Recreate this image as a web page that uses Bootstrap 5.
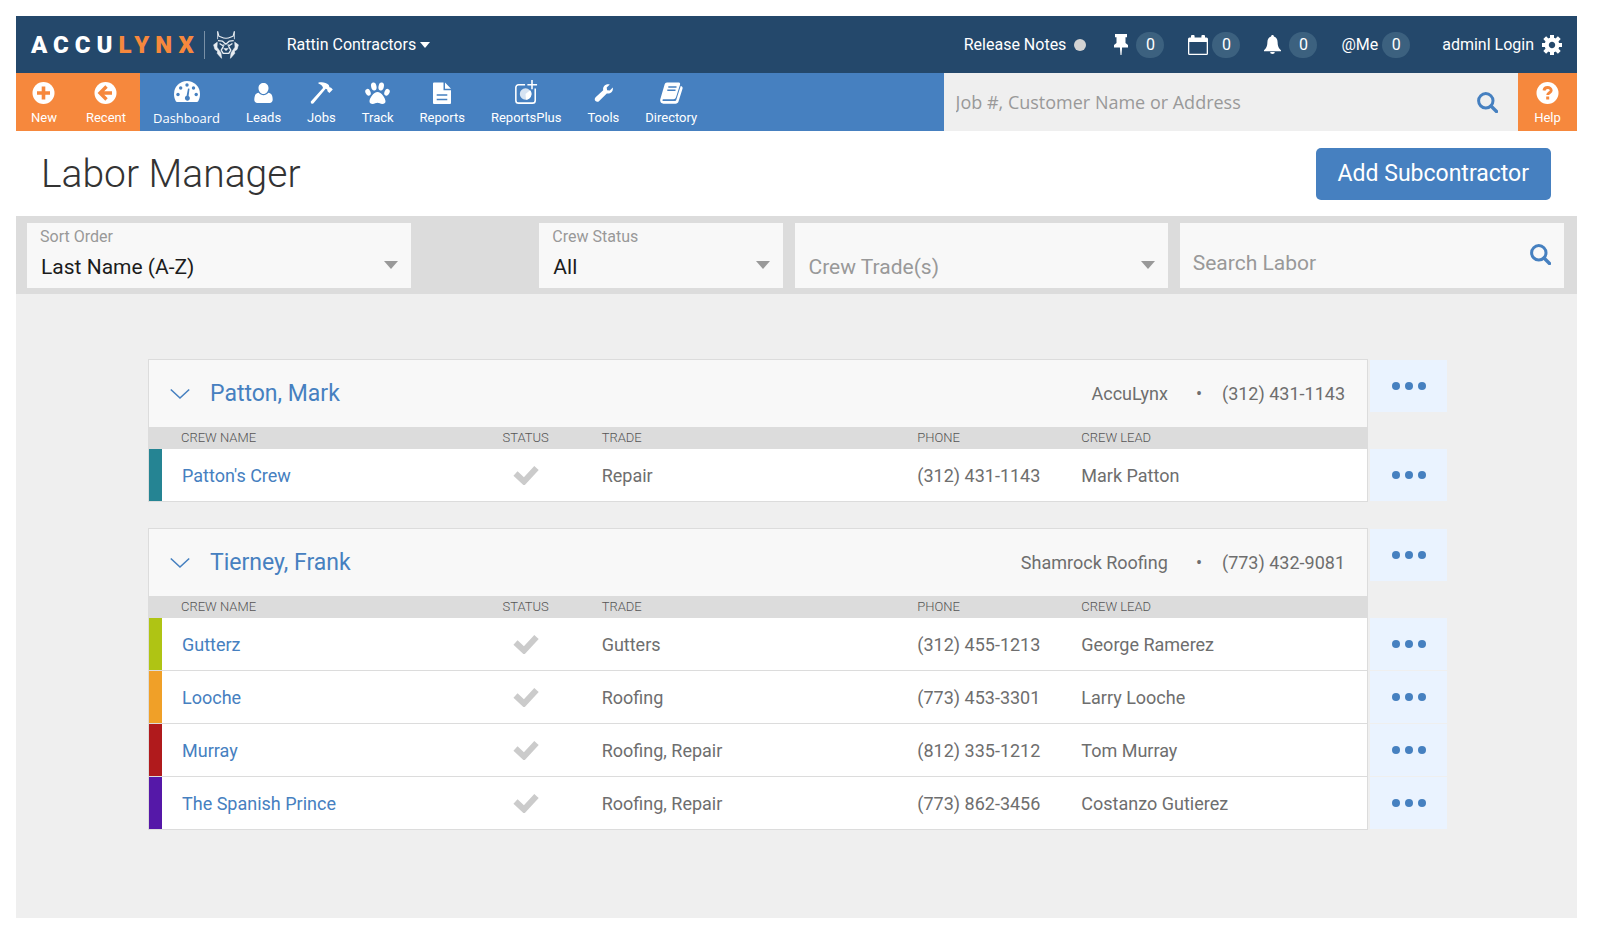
<!DOCTYPE html>
<html lang="en">
<head>
<meta charset="utf-8">
<meta name="viewport" content="width=device-width, initial-scale=1">
<title>Labor Manager</title>
<link href="https://cdn.jsdelivr.net/npm/bootstrap@5.3.0/dist/css/bootstrap.min.css" rel="stylesheet">
<style>
  :root {
    --navy: #24486b;
    --blue: #4680c0;
    --orange: #f6883d;
    --line: #dcdcdc;
    --panel: #f8f8f8;
    --page: #efefef;
    --muted: #999;
    --text: #6e6e6e;
  }
  body { font-family: Roboto, "Liberation Sans", sans-serif; font-size: 18px; color: var(--text); background: #fff; }
  a { color: var(--blue); text-decoration: none; }
  svg { display: block; flex: none; }
  .app { margin: 16px 21px 14px 16px; min-height: calc(100vh - 30px); background: var(--page); }

  .topbar { background: var(--navy); color: #fff; height: 57px; padding: 0 15px; font-size: 16px; }
  .topbar a, .topbar button { color: #fff; }
  .wordmark { font-size: 24px; font-weight: 900; line-height: 28px; letter-spacing: 6px; }
  .wordmark span { color: var(--orange); }
  .logo-rule { width: 1px; height: 28px; background: #7990a6; }
  .plain { border: 0; background: none; padding: 0; }
  .count { background: #3c617f; border-radius: 13px; width: 28px; height: 26px; }
  .dot { width: 12px; height: 12px; background: #d3d3d3; }

  .mainnav { background: var(--blue); height: 58px; }
  .navitem { color: #fff; font-size: 13px; line-height: 18px; padding: 8px 13px 0; }
  .navitem svg { margin-bottom: 4px; }
  .dash { font-family: "Open Sans", sans-serif; }
  .hot { background: var(--orange); }
  .hot .navitem { padding: 8px 14px 0 15px; }
  .help-link { width: 59px; }
  .jobsearch { flex: 0 0 36.8%; background: var(--page); padding: 0 20px 0 12px; }
  .jobsearch input { font: 18px "Open Sans", sans-serif; }
  input.bare { border: 0; background: none; outline: 0; padding: 0; min-width: 0; }
  input::placeholder { color: var(--muted); opacity: 1; }

  .titlebar { background: #fff; height: 85px; padding: 0 26px 0 25px; }
  .titlebar h1 { font-size: 39px; font-weight: 300; line-height: 48px; color: #333; }
  .btn-add { background: var(--blue); color: #fff; font-size: 23px; line-height: 28px; padding: 12px 22px; border: 0; border-radius: 5px; }
  .btn-add:hover { background: #3a70ad; color: #fff; }

  .filters { background: var(--line); padding: 7px 13px 6px 11px; gap: 12px; }
  .field { background: var(--panel); height: 65px; padding: 5px 13px 7px; min-width: 0; }
  .field label { font-size: 16px; line-height: 18px; color: var(--muted); }
  .field select { border: 0; outline: 0; padding: 0 22px 0 1px; font-size: 21px; line-height: 28px; color: #1c1c1c; appearance: none;
    background: url("data:image/svg+xml,%3Csvg xmlns='http://www.w3.org/2000/svg' viewBox='0 0 14 8'%3E%3Cpath d='M0 0h14L7 8z' fill='%23999'/%3E%3C/svg%3E") no-repeat right 0 top 8px / 14px 8px; }
  .field .unset { color: var(--muted); }
  .field input { font-size: 21px; line-height: 28px; }
  .f-wide { flex: 358 1 0; } .f-gap { flex: 104 1 0; } .f-status { flex: 217 1 0; } .f-trade { flex: 347 1 0; }

  .groups { padding: 65px 130px 88px 132px; gap: 26px; }
  .grouphead { background: var(--panel); border: 1px solid var(--line); border-bottom: 0; height: 68px; padding: 0 22px 0 21px; }
  .grouphead h2 { font-size: 23px; line-height: 28px; font-weight: 400; }
  .more { background: #eaf3ff; border: 0; width: 77px; height: 52px; }
  .grouphead + .more { margin: 1px 0 0 2px; }

  .crews { table-layout: fixed; border-collapse: separate; border-spacing: 0; }
  .crews th { background: var(--line); font-size: 13px; line-height: 22px; font-weight: 300; color: #555; padding: 0 0 0 28px; }
  .crews th:first-child { padding-left: 33px; }
  .crews td { background: #fff; height: 53px; padding: 0 0 0 28px; border-bottom: 1px solid var(--line); }
  .crews .swatch { padding: 0; border-left: 1px solid var(--line); }
  .crews td.name { padding-left: 20px; }
  .crews .status { padding: 0; text-align: center; }
  .crews .status svg { margin: 0 auto; }
  .crews td.lead-cell { border-right: 1px solid var(--line); }
  .crews .act { background: none; padding: 0 0 0 2px; border-color: var(--page); }
  .c-swatch { width: 14px; } .c-name { width: 24.3%; } .c-status { width: 96px; } .c-trade { width: 24.3%; } .c-phone { width: 164px; } .c-act { width: 79px; }
</style>
</head>
<body>

<svg width="0" height="0" class="position-absolute" aria-hidden="true">
  <symbol id="i-dots" viewBox="0 0 34 8"><circle cx="4" cy="4" r="4"/><circle cx="17" cy="4" r="4"/><circle cx="30" cy="4" r="4"/></symbol>
  <symbol id="i-check" viewBox="0 0 26 20"><path d="M2.500 8.500l8.500 8L23.500 3" fill="none" stroke="#cbcbcb" stroke-width="6"/></symbol>
  <symbol id="i-chev" viewBox="0 0 20 12"><path d="M.8 1.500L10 10l9.200-8.500" fill="none" stroke="#4680c0" stroke-width="1.600"/></symbol>
  <symbol id="i-search" viewBox="0 0 21 21"><circle cx="8.800" cy="8.800" r="7.200" fill="none" stroke="#4680c0" stroke-width="3"/><path d="M14 14l5.500 5.500" stroke="#4680c0" stroke-width="3.400" stroke-linecap="round"/></symbol>
</svg>

<div class="app">
  <header class="topbar d-flex align-items-center">
    <a href="#" class="d-flex align-items-center" aria-label="AccuLynx home">
      <span class="wordmark">ACCU<span>LYNX</span></span>
      <span class="logo-rule ms-1 me-2"></span>
      <svg width="26" height="28" viewBox="0 0 75 85" fill="none" stroke="#e8edf2" stroke-linejoin="round">
        <path d="M12 1l4 15c5 0 10 6 21.500 6S54 16 59 16l4-15" stroke-width="3.500"/>
        <path d="M12 1v24M63 1v24" stroke-width="2.500"/>
        <path d="M0 42l11-8-1 15 12 17 2 17-13-15 1-7-8-5zM75 42l-11-8 1 15-12 17-2 17 13-15-1-7 8-5z" fill="#e8edf2" stroke-width="2"/>
        <path d="M13 29l14 2 10 9 10-9 14-2M18 38l9 6 6-2M57 38l-9 6-6-2" stroke-width="4"/>
        <path d="M30 46l-7 12 6 10h17l6-10-7-12" stroke-width="4"/>
        <path d="M29 52h17l-8.500 9z" fill="#e8edf2" stroke="none"/>
      </svg>
    </a>
    <button type="button" class="plain d-flex align-items-center gap-1 ms-5">Rattin Contractors
      <svg width="10" height="6" viewBox="0 0 10 6" fill="#fff"><path d="M0 0h10L5 6z"/></svg>
    </button>
    <div class="d-flex align-items-center ms-auto">
      <a href="#" class="d-flex align-items-center me-4">Release Notes<span class="dot rounded-circle ms-2 me-1"></span></a>
      <a href="#" class="d-flex align-items-center gap-2 me-4" aria-label="Pinned">
        <svg width="14" height="21" viewBox="0 0 14 21" fill="#fff"><path d="M1 0h12v3.200h-1.500V9l2.500 2v2.500H8.100L7.500 21h-1l-.6-7.500H0V11l2.500-2V3.200H1z"/></svg>
        <span class="count d-flex align-items-center justify-content-center">0</span>
      </a>
      <a href="#" class="d-flex align-items-center gap-1 me-4" aria-label="Calendar">
        <svg width="20" height="20" viewBox="0 0 20 20"><path fill="#fff" fill-rule="evenodd" d="M1.500 2.500H3V1a1 1 0 0 1 1-1h1.600a1 1 0 0 1 1 1v1.500h6.800V1a1 1 0 0 1 1-1H16a1 1 0 0 1 1 1v1.500h1.500A1.500 1.500 0 0 1 20 4v14.500a1.500 1.500 0 0 1-1.500 1.500h-17A1.500 1.500 0 0 1 0 18.500V4a1.500 1.500 0 0 1 1.500-1.500zM1.300 7v11.700h17.400V7z"/></svg>
        <span class="count d-flex align-items-center justify-content-center">0</span>
      </a>
      <a href="#" class="d-flex align-items-center gap-2 me-4" aria-label="Alerts">
        <svg width="17" height="19" viewBox="0 0 17 19" fill="#fff"><path d="M8.500 0c.9 0 1.400.6 1.400 1.600 2.400.7 3.600 2.800 3.700 5.400.1 4.500 1.200 6.300 3.400 8.300v.9H0v-.9C2.200 13.300 3.300 11.500 3.400 7c.1-2.600 1.300-4.700 3.700-5.400C7.100.6 7.600 0 8.500 0zM6.200 17h4.600a2.300 2 0 0 1-4.600 0z"/></svg>
        <span class="count d-flex align-items-center justify-content-center">0</span>
      </a>
      <a href="#" class="d-flex align-items-center gap-1 me-4">@Me
        <span class="count d-flex align-items-center justify-content-center">0</span>
      </a>
      <button type="button" class="plain d-flex align-items-center gap-2 ms-2">adminl Login
        <svg width="20" height="20" viewBox="-10 -10 20 20"><circle r="5.300" fill="none" stroke="#fff" stroke-width="4.200"/><g stroke="#fff" stroke-width="4"><path d="M0-6v-4M0 6v4M6 0h4M-6 0h-4M4.500-4.500L7.300-7.300M4.500 4.500l2.800 2.800M-4.500 4.500l-2.800 2.800M-4.500-4.500l-2.800-2.800"/></g></svg>
      </button>
    </div>
  </header>

  <nav class="mainnav d-flex" aria-label="Main">
    <div class="hot d-flex">
      <a href="#" class="navitem d-flex flex-column align-items-center">
        <svg width="23" height="24" viewBox="0 0 23 24"><circle cx="11.500" cy="12" r="11" fill="#fff"/><path d="M11.500 5.500v13M5 12h13" stroke="#f6883d" stroke-width="3.600"/></svg>New</a>
      <a href="#" class="navitem d-flex flex-column align-items-center">
        <svg width="23" height="24" viewBox="0 0 23 24"><circle cx="11.500" cy="12" r="11" fill="#fff"/><path d="M12.500 5.500L6 12l6.500 6.500M6.500 12H18" stroke="#f6883d" stroke-width="3.400" fill="none"/></svg>Recent</a>
    </div>
    <a href="#" class="navitem dash d-flex flex-column align-items-center">
      <svg width="26" height="24" viewBox="0 0 26 24"><path fill="#fff" d="M13 0a13 13 0 0 1 13 13c0 3-.7 5-1.800 7.200a1.500 1.500 0 0 1-1.300.8H3.100a1.500 1.500 0 0 1-1.300-.8C.7 18 0 16 0 13A13 13 0 0 1 13 0z"/><g fill="#4680c0"><circle cx="4" cy="13.500" r="1.700"/><circle cx="6.700" cy="7" r="1.700"/><circle cx="13" cy="4" r="1.700"/><circle cx="19.500" cy="7" r="1.700"/><circle cx="22.200" cy="13.500" r="1.700"/><path d="M14 7.500l1.500.2-.9 7.300a2.500 2.500 0 1 1-2-.2z"/></g></svg>Dashboard</a>
    <a href="#" class="navitem d-flex flex-column align-items-center">
      <svg width="19" height="24" viewBox="0 0 19 24" fill="#fff"><path d="M9.500 2C12.300 2 14.500 4 14.500 7c0 3.300-2.200 6-5 6s-5-2.700-5-6c0-3 2.200-5 5-5zM4.600 11.800c1.300 1.600 3 2.500 4.900 2.500s3.600-.9 4.900-2.500c3 .3 4.300 3 4.300 7 0 2-1.300 3.200-3 3.200H3.300c-1.700 0-3-1.200-3-3.200 0-4 1.300-6.700 4.300-7z"/></svg>Leads</a>
    <a href="#" class="navitem d-flex flex-column align-items-center">
      <svg width="23" height="24" viewBox="0 0 23 24" fill="#fff"><path d="M8.500 1.500c4-.8 7.500-.2 10.300 2.600l.7 2.200 1.600.5 1.700 1.800-3.400 3.500-1.900-1.900-.3-1.700-1.500-.8L3.300 22.600c-1.500.5-2.800-.7-2.500-2.200L13 7c-.2-2-1.500-3.500-4.600-4.600z"/></svg>Jobs</a>
    <a href="#" class="navitem d-flex flex-column align-items-center">
      <svg width="25" height="24" viewBox="0 0 25 24" fill="#fff"><ellipse cx="8.800" cy="5.500" rx="2.700" ry="4" transform="rotate(-12 8.800 5.500)"/><ellipse cx="16.200" cy="5.500" rx="2.700" ry="4" transform="rotate(12 16.200 5.500)"/><ellipse cx="3" cy="11.300" rx="2.500" ry="3.500" transform="rotate(-25 3 11.300)"/><ellipse cx="22" cy="11.300" rx="2.500" ry="3.500" transform="rotate(25 22 11.300)"/><path d="M12.500 11c3.800 0 8 6 8 9.300 0 1.800-1.200 2.700-3.200 2.700-1.900 0-3.200-1.200-4.800-1.200S9.600 23 7.700 23c-2 0-3.200-.9-3.200-2.700 0-3.300 4.200-9.300 8-9.300z"/></svg>Track</a>
    <a href="#" class="navitem d-flex flex-column align-items-center">
      <svg width="18" height="24" viewBox="0 0 18 24"><path fill="#fff" d="M1 1.500h9.500V9.300H18V22a1 1 0 0 1-1 1H1a1 1 0 0 1-1-1V2.500a1 1 0 0 1 1-1zM12 1.500l6 6.300h-6z"/><path d="M3.700 14h10.600M3.700 18.500h10.600" stroke="#4680c0" stroke-width="1.600"/></svg>Reports</a>
    <a href="#" class="navitem d-flex flex-column align-items-center">
      <svg width="24" height="24" viewBox="0 1 24 26" overflow="visible"><path d="M11 5H4a3 3 0 0 0-3 3v14a3 3 0 0 0 3 3h15a3 3 0 0 0 3-3V9M18.500 0v10M13.500 5h10.500" fill="none" stroke="#fff" stroke-width="1.700"/><circle cx="11.500" cy="15" r="6.200" fill="#d6e3f2"/><path d="M11.500 15l5-4a6.200 6.200 0 0 1-4.500 10.200z" fill="#fff"/></svg>ReportsPlus</a>
    <a href="#" class="navitem d-flex flex-column align-items-center">
      <svg width="19" height="24" viewBox="0 0 19 24" fill="#fff"><path d="M15.800 3.400L12.700 6.500l.4 2.700 2.700.4 3-3c.7 3.600-2.200 6.600-6 5.900l-7.600 7.400c-1.100 1.100-2.600 1.100-3.700.1-1.100-1.100-1-2.600.1-3.700l7.600-7.100C8.400 5.400 11.500 2.200 15.800 3.400z"/></svg>Tools</a>
    <a href="#" class="navitem d-flex flex-column align-items-center">
      <svg width="23" height="24" viewBox="0 0 23 24"><path fill="#fff" d="M7 1.500h11.500c1.300 0 1.900.9 1.500 2.200l-4 12.600c-.4 1.300-1.300 2-2.600 2H3.200c-.9 0-1 1.800.2 1.800h11.300c.8 0 1.200-.3 1.500-1.100L20.700 5c1.600.5 2.200 1.400 1.800 2.700l-4 12.800c-.4 1.400-1.500 2.200-2.900 2.200H3.400C1 22.700-.3 20.600.3 18.200L4.600 3.500C5 2.200 5.700 1.500 7 1.500z"/><path d="M8.300 6h8.200M7.300 9.200h8.200" stroke="#4680c0" stroke-width="1.400"/></svg>Directory</a>
    <form class="jobsearch d-flex align-items-center ms-auto" role="search" onsubmit="return false">
      <input class="bare flex-fill" type="search" placeholder="Job #, Customer Name or Address" aria-label="Job number, customer name or address">
      <button class="plain" aria-label="Search jobs"><svg width="21" height="21"><use href="#i-search"/></svg></button>
    </form>
    <a href="#" class="navitem hot help-link d-flex flex-column align-items-center">
      <svg width="23" height="24" viewBox="0 0 23 24"><circle cx="11.500" cy="12" r="11" fill="#fff"/><path d="M8 9.500c.2-2 1.600-3 3.600-3s3.600 1.200 3.600 2.900c0 2.300-3.500 2.400-3.500 4.600" fill="none" stroke="#f6883d" stroke-width="2.900"/><path d="M10.200 15.500h3v3h-3z" fill="#f6883d"/></svg>Help</a>
  </nav>

  <main>
    <div class="titlebar d-flex align-items-center justify-content-between">
      <h1 class="mb-0">Labor Manager</h1>
      <button type="button" class="btn btn-add">Add Subcontractor</button>
    </div>

    <div class="filters d-flex">
      <div class="field f-wide d-flex flex-column justify-content-between">
        <label for="sort">Sort Order</label>
        <select id="sort"><option>Last Name (A-Z)</option></select>
      </div>
      <div class="f-gap"></div>
      <div class="field f-status d-flex flex-column justify-content-between">
        <label for="status">Crew Status</label>
        <select id="status"><option>All</option></select>
      </div>
      <div class="field f-trade d-flex flex-column justify-content-end">
        <select id="trade" class="unset" aria-label="Crew trades"><option>Crew Trade(s)</option></select>
      </div>
      <div class="field f-wide d-flex align-items-center">
        <input class="bare flex-fill pt-3" type="search" placeholder="Search Labor" aria-label="Search labor">
        <button type="button" class="plain" aria-label="Search"><svg width="21" height="21"><use href="#i-search"/></svg></button>
      </div>
    </div>

    <div class="groups d-flex flex-column">
      <section>
        <div class="d-flex align-items-start">
          <div class="grouphead flex-fill d-flex align-items-center">
            <button type="button" class="plain me-3" aria-label="Collapse"><svg width="20" height="12"><use href="#i-chev"/></svg></button>
            <h2 class="mb-0 ms-1"><a href="#">Patton, Mark</a></h2>
            <span class="ms-auto">AccuLynx</span><span class="ms-4 me-3 px-1">•</span><span>(312) 431-1143</span>
          </div>
          <button type="button" class="more d-flex align-items-center justify-content-center" aria-label="Actions for Patton, Mark"><svg width="34" height="8" fill="#4680c0"><use href="#i-dots"/></svg></button>
        </div>
        <table class="crews w-100">
          <colgroup><col class="c-swatch"><col class="c-name"><col class="c-status"><col class="c-trade"><col class="c-phone"><col><col class="c-act"></colgroup>
          <thead><tr><th colspan="2">CREW NAME</th><th class="status">STATUS</th><th>TRADE</th><th>PHONE</th><th>CREW LEAD</th><td class="act h-auto border-0"></td></tr></thead>
          <tbody>
            <tr><td class="swatch" style="background:#258493"></td><td class="name"><a href="#">Patton's Crew</a></td><td class="status"><svg width="26" height="20" role="img" aria-label="Active"><use href="#i-check"/></svg></td><td>Repair</td><td>(312) 431-1143</td><td class="lead-cell">Mark Patton</td><td class="act"><button type="button" class="more d-flex align-items-center justify-content-center" aria-label="Actions"><svg width="34" height="8" fill="#4680c0"><use href="#i-dots"/></svg></button></td></tr>
          </tbody>
        </table>
      </section>

      <section>
        <div class="d-flex align-items-start">
          <div class="grouphead flex-fill d-flex align-items-center">
            <button type="button" class="plain me-3" aria-label="Collapse"><svg width="20" height="12"><use href="#i-chev"/></svg></button>
            <h2 class="mb-0 ms-1"><a href="#">Tierney, Frank</a></h2>
            <span class="ms-auto">Shamrock Roofing</span><span class="ms-4 me-3 px-1">•</span><span>(773) 432-9081</span>
          </div>
          <button type="button" class="more d-flex align-items-center justify-content-center" aria-label="Actions for Tierney, Frank"><svg width="34" height="8" fill="#4680c0"><use href="#i-dots"/></svg></button>
        </div>
        <table class="crews w-100">
          <colgroup><col class="c-swatch"><col class="c-name"><col class="c-status"><col class="c-trade"><col class="c-phone"><col><col class="c-act"></colgroup>
          <thead><tr><th colspan="2">CREW NAME</th><th class="status">STATUS</th><th>TRADE</th><th>PHONE</th><th>CREW LEAD</th><td class="act h-auto border-0"></td></tr></thead>
          <tbody>
            <tr><td class="swatch" style="background:#afc414"></td><td class="name"><a href="#">Gutterz</a></td><td class="status"><svg width="26" height="20" role="img" aria-label="Active"><use href="#i-check"/></svg></td><td>Gutters</td><td>(312) 455-1213</td><td class="lead-cell">George Ramerez</td><td class="act"><button type="button" class="more d-flex align-items-center justify-content-center" aria-label="Actions"><svg width="34" height="8" fill="#4680c0"><use href="#i-dots"/></svg></button></td></tr>
            <tr><td class="swatch" style="background:#f0a028"></td><td class="name"><a href="#">Looche</a></td><td class="status"><svg width="26" height="20" role="img" aria-label="Active"><use href="#i-check"/></svg></td><td>Roofing</td><td>(773) 453-3301</td><td class="lead-cell">Larry Looche</td><td class="act"><button type="button" class="more d-flex align-items-center justify-content-center" aria-label="Actions"><svg width="34" height="8" fill="#4680c0"><use href="#i-dots"/></svg></button></td></tr>
            <tr><td class="swatch" style="background:#b01a1c"></td><td class="name"><a href="#">Murray</a></td><td class="status"><svg width="26" height="20" role="img" aria-label="Active"><use href="#i-check"/></svg></td><td>Roofing, Repair</td><td>(812) 335-1212</td><td class="lead-cell">Tom Murray</td><td class="act"><button type="button" class="more d-flex align-items-center justify-content-center" aria-label="Actions"><svg width="34" height="8" fill="#4680c0"><use href="#i-dots"/></svg></button></td></tr>
            <tr><td class="swatch" style="background:#5518a8"></td><td class="name"><a href="#">The Spanish Prince</a></td><td class="status"><svg width="26" height="20" role="img" aria-label="Active"><use href="#i-check"/></svg></td><td>Roofing, Repair</td><td>(773) 862-3456</td><td class="lead-cell">Costanzo Gutierez</td><td class="act"><button type="button" class="more d-flex align-items-center justify-content-center" aria-label="Actions"><svg width="34" height="8" fill="#4680c0"><use href="#i-dots"/></svg></button></td></tr>
          </tbody>
        </table>
      </section>
    </div>
  </main>
</div>

<script src="https://cdn.jsdelivr.net/npm/bootstrap@5.3.0/dist/js/bootstrap.bundle.min.js"></script>
</body>
</html>
